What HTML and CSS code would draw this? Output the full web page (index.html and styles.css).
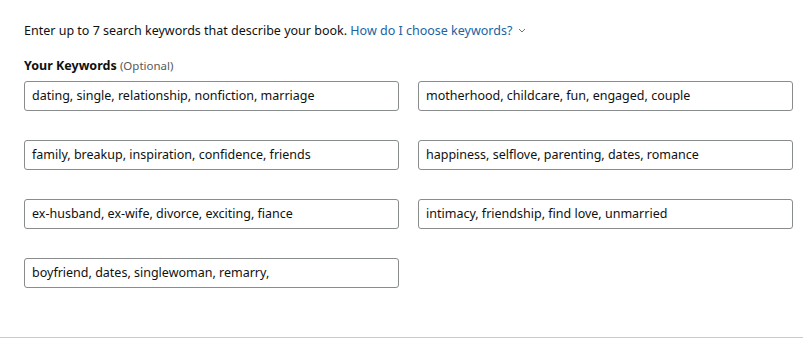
FILE: index.html
```html
<!DOCTYPE html>
<html>
<head>
<meta charset="utf-8">
<link rel="stylesheet" href="styles.css">
</head>
<body>
<div class="page">
  <p class="intro">Enter up to 7 search keywords that describe your book. <a class="link" href="#">How do I choose keywords?<svg class="chev" width="8" height="5" viewBox="0 0 8 5"><path d="M1 1l3 3 3-3" fill="none" stroke="#6f7373" stroke-width="1"/></svg></a></p>
  <div class="label"><span class="bold">Your Keywords</span> <span class="opt">(Optional)</span></div>
  <div class="grid">
    <div class="field">dating, single, relationship, nonfiction, marriage</div>
    <div class="field">motherhood, childcare, fun, engaged, couple</div>
    <div class="field">family, breakup, inspiration, confidence, friends</div>
    <div class="field">happiness, selflove, parenting, dates, romance</div>
    <div class="field">ex-husband, ex-wife, divorce, exciting, fiance</div>
    <div class="field">intimacy, friendship, find love, unmarried</div>
    <div class="field">boyfriend, dates, singlewoman, remarry,</div>
  </div>
</div>
<div class="rule"></div>
</body>
</html>
```
FILE: styles.css
```css
html, body {
  margin: 0;
  padding: 0;
  background: #fff;
}
body {
  font-family: "Noto Sans", "Open Sans", sans-serif;
  font-size: 12.5px;
  color: #0f1111;
  height: 338px;
}
.page {
  padding: 22px 10px 0 24px;
  height: 337px;
  box-sizing: border-box;
}
.intro {
  margin: 0;
  line-height: 18px;
}
.link {
  color: #2162a1;
  text-decoration: none;
}
.chev {
  margin-left: 6px;
  vertical-align: 2px;
}
.label {
  margin-top: 17px;
  line-height: 18px;
}
.bold {
  font-weight: 700;
}
.opt {
  color: #565959;
  font-size: 11.5px;
}
.grid {
  margin-top: 6px;
  display: grid;
  grid-template-columns: 375px 375px;
  column-gap: 19px;
  row-gap: 29px;
}
.field {
  height: 30px;
  box-sizing: border-box;
  border: 1px solid #888c8c;
  border-radius: 3px;
  padding: 0 7px;
  line-height: 28px;
  white-space: nowrap;
  overflow: hidden;
}
.rule {
  height: 1px;
  background: #c8cbcb;
}
```
